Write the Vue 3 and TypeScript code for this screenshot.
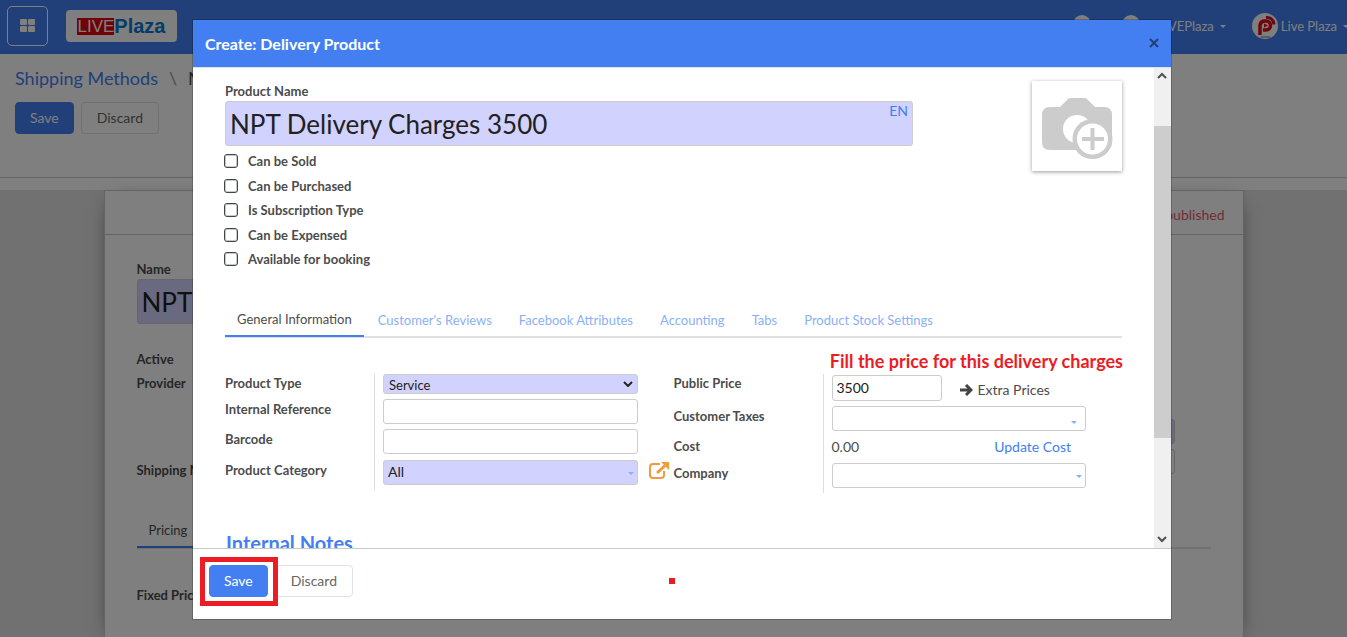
<script setup lang="ts">
import { ref } from 'vue'

const productName = ref('NPT Delivery Charges 3500')
const productType = ref('Service')
const category = ref('All')
const price = ref('3500')
const reference = ref('')
const barcode = ref('')
const taxes = ref('')
const company = ref('')

const options = ref([
  { id: 'sold', label: 'Can be Sold', on: false },
  { id: 'purchased', label: 'Can be Purchased', on: false },
  { id: 'subscription', label: 'Is Subscription Type', on: false },
  { id: 'expensed', label: 'Can be Expensed', on: false },
  { id: 'booking', label: 'Available for booking', on: false },
])

const tabs = [
  'General Information',
  "Customer's Reviews",
  'Facebook Attributes',
  'Accounting',
  'Tabs',
  'Product Stock Settings',
]
const activeTab = ref(tabs[0])
</script>

<template>
  <div class="page">
    <div class="backdrop-page">
      <header class="navbar">
        <button class="apps" aria-label="Applications">
          <svg width="16" height="14" viewBox="0 0 16 14" fill="#fff">
            <rect x="0" y="0" width="7" height="6" rx="1" /><rect x="8" y="0" width="7" height="6" rx="1" />
            <rect x="0" y="7" width="7" height="6" rx="1" /><rect x="8" y="7" width="7" height="6" rx="1" />
          </svg>
        </button>
        <a class="logo" href="#"><span class="live">LIVE</span><span class="plaza">Plaza</span></a>
        <div class="systray">
          <span class="counter"></span>
          <span class="counter"></span>
          <a class="menu" href="#">LIVEPlaza<i class="tri"></i></a>
          <a class="menu user" href="#">
            <svg width="26" height="26" viewBox="0 0 26 26">
              <circle cx="13" cy="13" r="13" fill="#fff" />
              <path d="M8 22V12a5 5 0 0 1 5-4h1a4.500 4.500 0 0 1 0 9h-3" fill="none" stroke="#e30613" stroke-width="3.500" />
              <path d="M12 10.500l4 2-4 2z" fill="#e30613" />
              <path d="M14 4.500c4-.5 7.500 2 8 7" fill="none" stroke="#c8102e" stroke-width="3" />
              <path d="M9 24h9" stroke="#777" stroke-width="1" />
            </svg>
            <span>Live Plaza</span><i class="tri"></i>
          </a>
        </div>
      </header>
      <section class="control">
        <nav class="crumbs"><a href="#">Shipping Methods</a><span class="slash">\</span><span>NPT Delivery Charges</span></nav>
        <div class="buttons">
          <button class="btn primary">Save</button>
          <button class="btn">Discard</button>
        </div>
      </section>
      <main class="content">
        <div class="sheet">
          <div class="status">Unpublished</div>
          <div class="sheet-body">
            <label class="lbl" for="ship-name">Name</label>
            <input id="ship-name" class="title-input ship" value="NPT Delivery Charges 3500" />
            <div class="pair">
              <div class="pair-labels">
                <span class="lbl">Active</span>
                <span class="lbl provider">Provider</span>
                <span class="lbl">Shipping Margin</span>
              </div>
              <div class="pair-fields">
                <input class="field required" aria-label="Delivery product" />
                <input class="field" aria-label="Company" />
              </div>
            </div>
            <div class="tabs under"><button class="tab active">Pricing</button></div>
            <span class="lbl">Fixed Price</span>
          </div>
        </div>
      </main>
    </div>

    <div class="overlay">
      <div class="modal" role="dialog" aria-labelledby="dialog-title">
        <header class="modal-head">
          <h4 id="dialog-title">Create: Delivery Product</h4>
          <button class="close" aria-label="Close">
            <svg width="10" height="10" viewBox="0 0 10 10"><path d="M1 1l8 8M9 1L1 9" stroke="#22407a" stroke-width="2" /></svg>
          </button>
        </header>

        <div class="modal-body">
          <div class="form">
            <div class="top">
              <div class="ident">
                <label class="lbl" for="p-name">Product Name</label>
                <div class="name-wrap">
                  <input id="p-name" v-model="productName" class="title-input" />
                  <button class="lang">EN</button>
                </div>
                <div class="checks">
                  <div v-for="o in options" :key="o.id" class="check">
                    <input :id="o.id" v-model="o.on" type="checkbox" />
                    <label class="lbl" :for="o.id">{{ o.label }}</label>
                  </div>
                </div>
              </div>
              <div class="photo">
                <svg width="90" height="90" viewBox="0 0 90 90">
                  <path d="M18 26H28L36 18Q37 17 39 17H52Q54 17 55 18L63 26H72Q80 26 80 34V61Q80 69 72 69H18Q10 69 10 61V34Q10 26 18 26Z" fill="#ccc" />
                  <circle cx="45" cy="48" r="14" fill="#fff" />
                  <circle cx="60.500" cy="58" r="20" fill="#ccc" />
                  <circle cx="60.500" cy="58" r="15.500" fill="#fff" />
                  <path d="M50 58H72M60.500 47V69" stroke="#ccc" stroke-width="4" />
                </svg>
              </div>
            </div>

            <div class="tabs">
              <button v-for="t in tabs" :key="t" class="tab" :class="{ active: t === activeTab }" @click="activeTab = t">{{ t }}</button>
            </div>

            <div class="groups">
              <div class="group">
                <div class="row r-select">
                  <label class="lbl" for="p-type">Product Type</label>
                  <div class="cell">
                    <select id="p-type" v-model="productType" class="field required">
                      <option>Service</option>
                      <option>Consumable</option>
                    </select>
                    <svg class="chev" width="10" height="6" viewBox="0 0 10 6"><path d="M1 1l4 4 4-4" fill="none" stroke="#222" stroke-width="2" /></svg>
                  </div>
                </div>
                <div class="row">
                  <label class="lbl" for="p-ref">Internal Reference</label>
                  <div class="cell"><input id="p-ref" v-model="reference" class="field" /></div>
                </div>
                <div class="row r-bar">
                  <label class="lbl" for="p-bar">Barcode</label>
                  <div class="cell"><input id="p-bar" v-model="barcode" class="field" /></div>
                </div>
                <div class="row">
                  <label class="lbl" for="p-cat">Product Category</label>
                  <div class="cell">
                    <input id="p-cat" v-model="category" class="field required" />
                    <i class="drop"></i>
                    <button class="ext" aria-label="Open category">
                      <svg width="20" height="17" viewBox="0 0 20 17">
                        <path d="M11 2H4Q1 2 1 5V13Q1 16 4 16H12Q15 16 15 13V9" fill="none" stroke="#f3993e" stroke-width="2" />
                        <path d="M8 11L16 3.500" stroke="#f3993e" stroke-width="3" />
                        <path d="M12 0H20V8Z" fill="#f3993e" />
                      </svg>
                    </button>
                  </div>
                </div>
              </div>

              <div class="group">
                <p class="hint">Fill the price for this delivery charges</p>
                <div class="row r-price">
                  <label class="lbl" for="p-price">Public Price</label>
                  <div class="cell price">
                    <input id="p-price" v-model="price" class="field" />
                    <button class="extra">
                      <svg width="13" height="12" viewBox="0 0 13 12"><path d="M0 6H11M6 1L11 6L6 11" fill="none" stroke="#444" stroke-width="3" /></svg>
                      <span>Extra Prices</span>
                    </button>
                  </div>
                </div>
                <div class="row">
                  <label class="lbl" for="p-tax">Customer Taxes</label>
                  <div class="cell"><input id="p-tax" v-model="taxes" class="field" /><i class="drop inset"></i></div>
                </div>
                <div class="row r-cost">
                  <span class="lbl">Cost</span>
                  <div class="cell cost"><span>0.00</span><a href="#">Update Cost</a></div>
                </div>
                <div class="row">
                  <label class="lbl" for="p-com">Company</label>
                  <div class="cell"><input id="p-com" v-model="company" class="field" /><i class="drop"></i></div>
                </div>
              </div>
            </div>

            <h2 class="notes">Internal Notes</h2>
          </div>

          <div class="scroll">
            <svg width="17" height="17" viewBox="0 0 17 17"><path d="M4 10l4-4 4 4" fill="none" stroke="#505050" stroke-width="2" /></svg>
            <div class="track"><div class="thumb"></div></div>
            <svg width="17" height="17" viewBox="0 0 17 17"><path d="M4 6l4 4 4-4" fill="none" stroke="#505050" stroke-width="2" /></svg>
          </div>
        </div>

        <footer class="modal-foot">
          <span class="marked"><button class="btn primary">Save</button></span>
          <button class="btn">Discard</button>
          <i class="dot"></i>
        </footer>
      </div>
    </div>
  </div>
</template>

<style>
html,
body {
  margin: 0;
  overflow: hidden;
}
</style>

<style scoped>
* {
  box-sizing: border-box;
}
.page {
  position: relative;
  height: 100vh;
  overflow: hidden;
  font: 14px/20px Lato, sans-serif;
  color: #4c4c4c;
}
button,
input,
select {
  font: inherit;
  color: inherit;
}
button {
  background: none;
  border: 0;
  padding: 0;
}
a {
  color: #437ef2;
  text-decoration: none;
}
.backdrop-page {
  height: 100%;
  display: flex;
  flex-direction: column;
  background: #fff;
}
.navbar {
  height: 54px;
  flex: none;
  background: #437ff1;
  display: flex;
  align-items: center;
  padding: 0 0 2px 7px;
}
.apps {
  width: 41px;
  height: 40px;
  border: 1px solid #fff;
  border-radius: 5px;
  display: grid;
  place-items: center;
}
.logo {
  margin-left: 18px;
  width: 111px;
  height: 32px;
  border-radius: 4px;
  background: #fff;
  display: flex;
  align-items: center;
  justify-content: center;
  font: 17px/17px "Liberation Sans", Arial, sans-serif;
}
.live {
  background: #e3000f;
  color: #fff;
}
.plaza {
  color: #0a78d1;
  font-size: 20px;
  font-weight: 700;
}
.systray {
  margin-left: auto;
  margin-right: -2px;
  display: flex;
  align-items: center;
}
.counter {
  width: 18px;
  height: 18px;
  border-radius: 9px;
  margin: 0 31px 5px 0;
  background: #fff;
}
.counter + .menu {
  margin-left: -13px;
}
.menu {
  color: #fff;
  display: flex;
  align-items: center;
  font-size: 13px;
}
.user {
  margin-left: 26px;
}
.user span {
  margin-left: 3px;
}
.tri {
  margin-left: 6px;
  border: 3px solid transparent;
  border-top-color: currentColor;
  border-bottom: 0;
}
.control {
  height: 124px;
  flex: none;
  border-bottom: 1px solid #c8c8c8;
  padding: 12px 15px;
}
.crumbs {
  font-size: 18px;
  line-height: 24px;
  white-space: nowrap;
}
.slash {
  color: #999;
  margin: 0 11px;
}
.buttons {
  display: flex;
  gap: 7px;
  margin-top: 12px;
}
.btn {
  height: 32px;
  padding: 0 15px;
  border: 1px solid #dee2e6;
  border-radius: 4px;
  background: #fff;
  color: #666;
}
.btn.primary {
  padding: 0 14px;
  background: #437ff1;
  border-color: #437ff1;
  color: #fff;
}
.content {
  flex: 1;
  min-height: 0;
  margin-top: 12px;
  background: #e2e2e2;
}
.sheet {
  max-width: 1140px;
  height: 100%;
  margin: 0 auto;
  background: #fff;
  border: 1px solid #c8c8c8;
  border-bottom: 0;
  box-shadow: 0 5px 20px -10px #000;
}
.status {
  height: 44px;
  border-bottom: 1px solid #c8c8c8;
  padding: 14px 18px;
  text-align: right;
  color: #e6586a;
}
.sheet-body {
  padding: 24px 32px;
}
.lbl {
  display: block;
  font-size: 13px;
  font-weight: 700;
}
.title-input {
  display: block;
  width: 100%;
  height: 45px;
  padding: 0 4px;
  border: 1px solid #ccc;
  border-radius: 3px;
  background: #d2d2ff;
  color: #212121;
  font-size: 26px;
}
.title-input.ship {
  width: 75%;
}
.pair {
  display: flex;
  justify-content: space-between;
  margin-top: 25px;
  padding-right: 36px;
}
.provider {
  margin: 4px 0 67px;
}
.pair-fields {
  width: 254px;
  padding-top: 70px;
}
.pair-fields .field {
  margin-bottom: 5px;
}
.overlay {
  position: absolute;
  inset: 0;
  background: rgba(0, 0, 0, 0.5);
  padding: 19px 0 17px 17px;
}
.modal {
  max-width: 980px;
  height: 100%;
  margin: 0 auto;
  background: #fff;
  border: 1px solid rgba(0, 0, 0, 0.2);
  background-clip: padding-box;
  display: flex;
  flex-direction: column;
}
.modal-head {
  height: 48px;
  flex: none;
  padding: 0 12px 2px;
  background: #437ff1;
  border-bottom: 1px solid #dee2e6;
  display: flex;
  align-items: center;
  justify-content: space-between;
}
.modal-head h4 {
  margin: 2px 0 0;
  color: #fff;
  font-size: 16px;
  font-weight: 700;
}
.close {
  display: grid;
  place-items: center;
}
.modal-body {
  flex: 1;
  min-height: 0;
  display: flex;
  overflow: hidden;
}
.form {
  flex: 1;
  padding: 13px 32px 0;
}
.top {
  display: flex;
  justify-content: space-between;
}
.ident {
  flex: 1;
}
.name-wrap {
  position: relative;
}
.lang {
  position: absolute;
  top: 0;
  right: 5px;
  color: #437ef2;
}
.checks {
  height: 118px;
  margin-top: 5px;
  display: flex;
  flex-direction: column;
  justify-content: space-between;
}
.check {
  display: flex;
  align-items: center;
  gap: 10px;
}
.check input {
  appearance: none;
  width: 14px;
  height: 14px;
  margin: 0 0 0 -1px;
  border: 1px solid #41464b;
  border-radius: 3px;
  background: #fff;
  box-shadow: inset 0 0 0 1px #c8cacd;
}
.photo {
  width: 90px;
  height: 90px;
  margin-left: 119px;
  box-shadow: 0 1px 4px rgba(0, 0, 0, 0.4);
}
.tabs {
  display: flex;
  align-items: flex-end;
  gap: 1px;
  height: 36px;
  margin-top: 33px;
  border-bottom: 2px solid #dee2e6;
}
.tab {
  padding: 0 13px 6px;
  color: #8ab0f7;
  font-size: 13px;
}
.tab.active {
  padding: 0 12px 6px;
  margin-bottom: -1px;
  border-bottom: 2px solid #437ff1;
  color: #4c4c4c;
}
.tabs.under {
  margin: 33px 0 36px;
}
.groups {
  display: grid;
  grid-template-columns: 1fr 1fr;
  align-items: start;
  margin-top: 36px;
}
.group {
  position: relative;
  padding-right: 36px;
}
.row {
  display: flex;
  height: 30px;
}
.row > .lbl {
  width: 150px;
  flex: none;
  border-right: 1px solid #ddd;
}
.row.r-select > .lbl,
.row.r-price > .lbl {
  line-height: 18px;
}
.cell {
  position: relative;
  flex: 1;
  padding-left: 8px;
}
.field {
  display: block;
  width: 100%;
  height: 25px;
  padding: 0 4px 2px;
  border: 1px solid #ccc;
  border-radius: 3px;
  background: #fff;
  color: #212121;
}
.field.required {
  background: #d2d2ff;
}
select.field {
  appearance: none;
  height: 20px;
  padding: 0 5px 2px;
  font-size: 13px;
}
.r-select {
  height: 25px;
}
.r-bar {
  height: 31px;
}
.r-price {
  height: 32px;
}
.r-cost {
  height: 27px;
}
.chev {
  position: absolute;
  right: 5px;
  top: 7px;
}
.drop {
  position: absolute;
  right: 4px;
  top: 12px;
  border: 3px solid transparent;
  border-top-color: #8ab0f7;
  border-bottom: 0;
}
.drop.inset {
  right: 9px;
  top: 15px;
}
.ext {
  position: absolute;
  left: 100%;
  top: 2px;
  margin-left: 11px;
}
.price {
  display: flex;
  align-items: flex-start;
  padding-top: 1px;
}
.price .field {
  width: 110px;
  height: 26px;
}
.extra {
  display: flex;
  align-items: center;
  gap: 5px;
  margin: 5px 0 0 18px;
}
.cost {
  display: flex;
  justify-content: space-between;
  padding: 1px 15px 0 8px;
}
.hint {
  position: absolute;
  bottom: 100%;
  right: -1px;
  margin: 0 0 3px;
  font-size: 18px;
  font-weight: 700;
  color: #ed1c24;
  white-space: nowrap;
}
.notes {
  margin: 38px 0 0 1px;
  font-size: 20px;
  line-height: 24px;
  color: #437ef2;
}
.scroll {
  width: 17px;
  display: flex;
  flex-direction: column;
  background: #f0f0f0;
}
.scroll svg {
  flex: none;
}
.track {
  flex: 1;
  padding-top: 41px;
}
.thumb {
  height: 77%;
  background: #cdcdcd;
}
.modal-foot {
  position: relative;
  height: 71px;
  flex: none;
  border-top: 1px solid #c8c8c8;
  padding: 16px;
  display: flex;
  align-items: flex-start;
  gap: 7px;
}
.marked {
  position: relative;
  z-index: 1;
  display: flex;
}
.marked::after {
  content: "";
  position: absolute;
  inset: -8px -10px -9px -9px;
  border: 5px solid #ed1c24;
  pointer-events: none;
}
.dot {
  position: absolute;
  left: 476px;
  top: 29px;
  width: 6px;
  height: 6px;
  background: #ed1c24;
}
</style>
